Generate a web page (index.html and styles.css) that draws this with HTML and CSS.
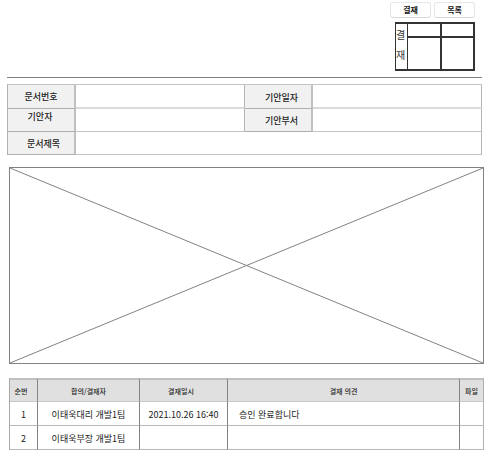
FILE: index.html
```html
<!DOCTYPE html>
<html lang="ko">
<head>
<meta charset="utf-8">
<title>결재 문서</title>
<link rel="stylesheet" href="styles.css">
</head>
<body>
<header class="top">
  <div class="approval">
    <div class="actions">
      <button class="btn" type="button">결재</button>
      <button class="btn" type="button">목록</button>
    </div>
    <table class="stamp">
      <colgroup><col class="stamp-label"><col class="stamp-first"><col></colgroup>
      <tr class="stamp-head"><th rowspan="2" scope="rowgroup">결<br>재</th><td></td><td></td></tr>
      <tr class="stamp-body"><td></td><td></td></tr>
    </table>
  </div>
</header>
<main>
  <table class="info">
    <colgroup><col class="info-label"><col class="info-value"><col class="info-label"><col></colgroup>
    <tr><th scope="row">문서번호</th><td></td><th class="second" scope="row">기안일자</th><td></td></tr>
    <tr><th class="raised" scope="row">기안자</th><td></td><th class="second" scope="row">기안부서</th><td></td></tr>
    <tr><th class="title" scope="row">문서제목</th><td colspan="3"></td></tr>
  </table>
  <svg class="content" aria-hidden="true">
    <line x1="0" y1="0" x2="100%" y2="100%"/>
    <line x1="100%" y1="0" x2="0" y2="100%"/>
  </svg>
  <table class="history">
    <colgroup><col class="c-no"><col class="c-name"><col class="c-date"><col><col class="c-file"></colgroup>
    <thead>
      <tr><th class="shifted" scope="col">순번</th><th scope="col">합의/결재자</th><th class="shifted" scope="col">결재일시</th><th scope="col">결재 의견</th><th scope="col">파일</th></tr>
    </thead>
    <tbody>
      <tr><td>1</td><td>이태욱대리 개발1팀</td><td>2021.10.26 16:40</td><td class="opinion">승인 완료합니다</td><td></td></tr>
      <tr><td>2</td><td>이태욱부장 개발1팀</td><td></td><td class="opinion"></td><td></td></tr>
    </tbody>
  </table>
</main>
</body>
</html>
```
FILE: styles.css
```css
* { box-sizing: border-box; }

body {
  margin: 0;
  padding: 2px 11px 0 7px;
  background: #fff;
  color: #222;
  font: 9px/12px "Noto Sans CJK KR", sans-serif;
}

table {
  width: 100%;
  table-layout: fixed;
  border-collapse: separate;
  border-spacing: 0;
}

th, td { padding: 0; font-weight: 400; text-align: center; vertical-align: middle; }

.top {
  display: flex;
  justify-content: flex-end;
  margin-right: 2px;
  padding: 0 7px 6px 0;
  border-bottom: 1px solid #828282;
}

.approval { display: flex; flex-direction: column; align-items: flex-end; gap: 4px; }
.actions { display: flex; gap: 3px; }

.btn {
  width: 41px;
  height: 16px;
  padding: 0;
  border: 1px solid #e6e6e8;
  border-bottom-color: #d8d8da;
  border-radius: 3px;
  background: #fff;
  color: #111;
  font: 700 8px/12px "Noto Sans CJK KR", sans-serif;
}

.stamp { width: 80px; border: 2px solid #333; border-left-width: 1px; }
.stamp-label { width: 12px; }
.stamp-first { width: 32px; }
.stamp th {
  padding: 0 2px 4px 0;
  border-right: 1px solid #333;
  font-size: 10px;
  line-height: 20px;
  color: #333;
}
.stamp td + td { border-left: 2px solid #333; }
.stamp-head { height: 14px; }
.stamp-head td { border-bottom: 2px solid #333; }
.stamp-body { height: 31px; }

.info {
  width: calc(100% - 2px);
  margin-top: 6px;
  border-left: 1px solid #b0b0b0;
  border-top: 1px solid #c4c4c4;
}
.info tr { height: 24px; }
.info tr + tr { height: 23px; }
.info-label { width: 68px; }
.info-value { width: 169px; }
.info th {
  background: #f1f1f1;
  border-right: 2px solid #c0c0c0;
  border-bottom: 1px solid #b0b0b0;
  font-weight: 500;
}
.info td { border-right: 1px solid #b4b4b4; border-bottom: 1px solid #c4c4c4; }
.info tr:first-child td { border-bottom: 2px solid #dadada; }
.info .second { padding: 2px 0 0 7px; }
.info .title { padding: 2px 0 0 5px; }
.info .raised { padding: 2px 2px 0 0; vertical-align: top; }

.content {
  display: block;
  width: calc(100% - 2px);
  height: 197px;
  margin: 12px 0 14px 2px;
  border: 1px solid #828282;
}
.content line { stroke: #828282; stroke-width: 1; }

.history {
  width: calc(100% - 2px);
  margin-left: 2px;
  border-left: 1px solid #aaa;
}
.history tr { height: 24px; }
.history th {
  background: #e0e0e0;
  border-top: 2px solid #c0c0c0;
  border-bottom: 1px solid #c8c8c8;
  border-right: 1px solid #828282;
  font-size: 7px;
  font-weight: 500;
}
.history .shifted { padding-right: 5px; }
.history td {
  padding-top: 2px;
  border-right: 1px solid #828282;
  border-bottom: 1px solid #b8b8b8;
}
.history th:last-child, .history td:last-child { border-right-color: #b0b0b0; }
.history .opinion { padding-left: 11px; text-align: left; }
.c-no { width: 28px; }
.c-name { width: 102px; }
.c-date { width: 88px; }
.c-file { width: 24px; }
```
